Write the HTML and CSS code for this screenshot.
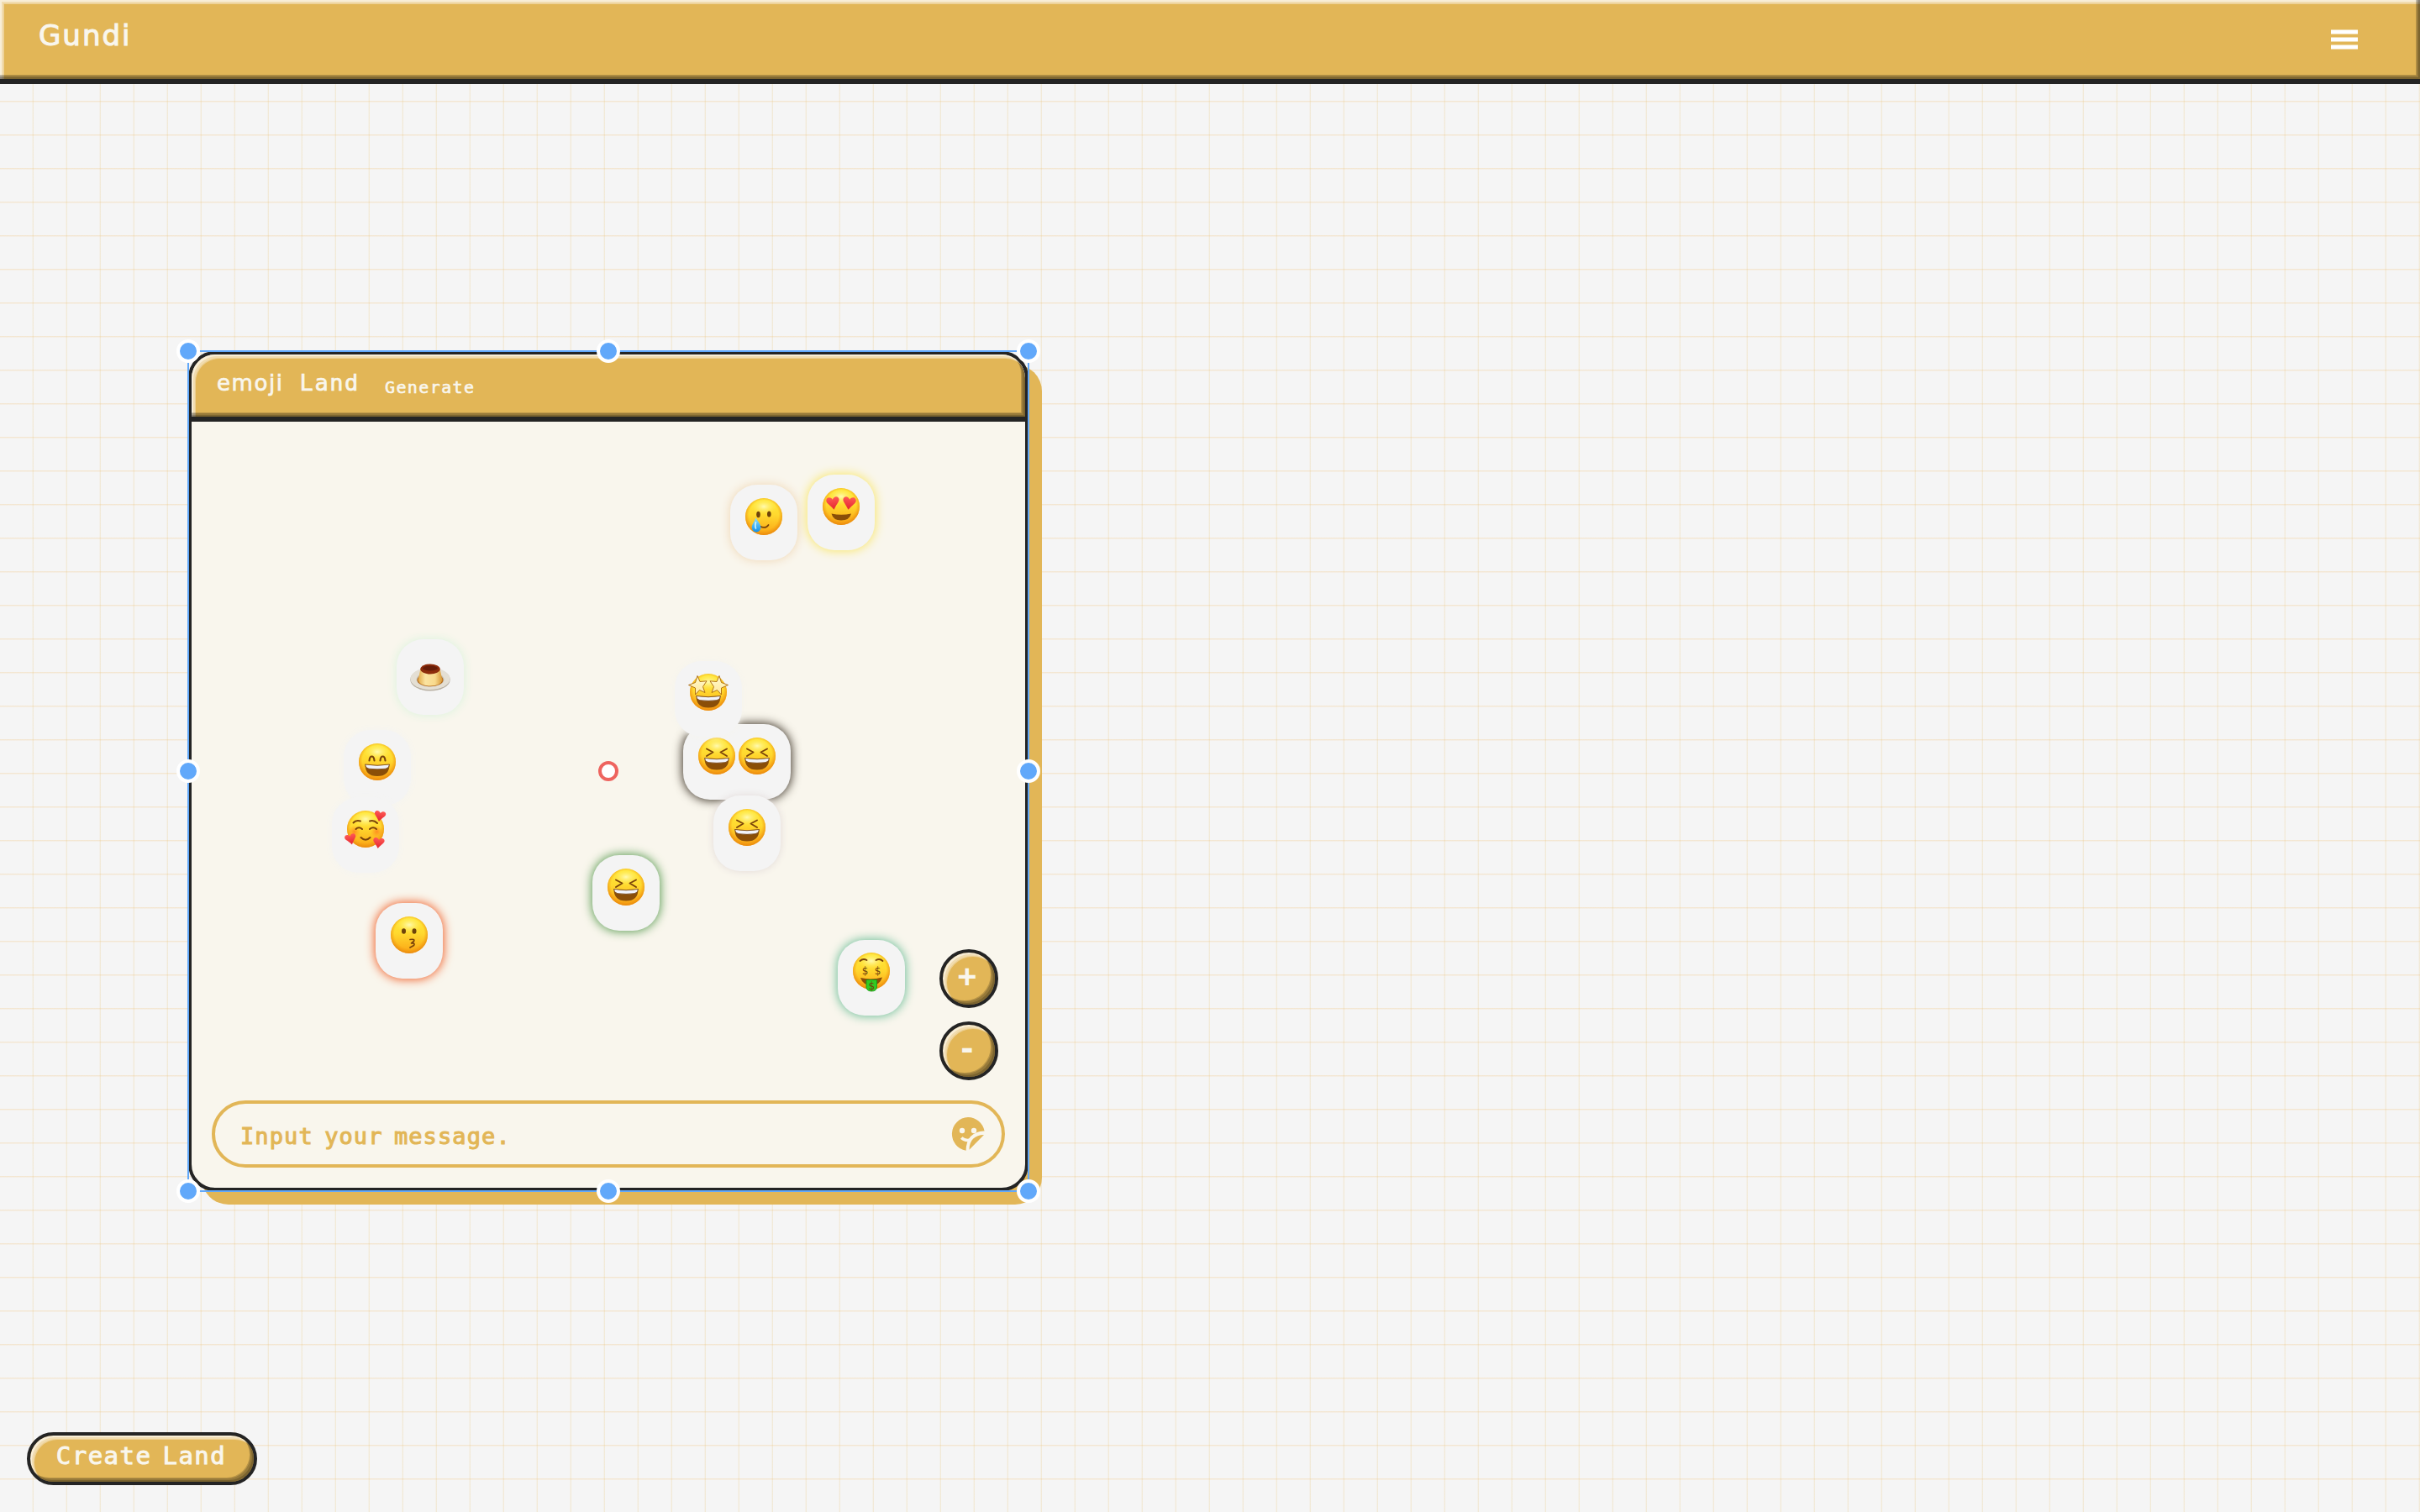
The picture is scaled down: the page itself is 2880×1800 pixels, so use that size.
FILE: index.html
```html
<!DOCTYPE html>
<html lang="en">
<head>
<meta charset="utf-8">
<title>Gundi</title>
<link rel="stylesheet" href="styles.css">
</head>
<body>
<svg class="defs" width="0" height="0" aria-hidden="true">
  <defs>
    <linearGradient id="skin" x1="0" y1="0" x2="0" y2="1">
      <stop offset="0" stop-color="#ffe838"/><stop offset=".45" stop-color="#ffd92f"/><stop offset="1" stop-color="#fba414"/>
    </linearGradient>
    <radialGradient id="rim" cx=".5" cy=".46" r=".54">
      <stop offset=".74" stop-color="#f29a10" stop-opacity="0"/><stop offset="1" stop-color="#e8870d" stop-opacity=".95"/>
    </radialGradient>
    <radialGradient id="glow" cx=".5" cy=".5" r=".5">
      <stop offset="0" stop-color="#fffbb8" stop-opacity=".95"/><stop offset="1" stop-color="#ffee50" stop-opacity="0"/>
    </radialGradient>
    <linearGradient id="red" x1="0" y1="0" x2="0" y2="1">
      <stop offset="0" stop-color="#ff5a55"/><stop offset="1" stop-color="#e3232f"/>
    </linearGradient>
    <radialGradient id="blush" cx=".5" cy=".5" r=".5">
      <stop offset="0" stop-color="#ff6a1c" stop-opacity=".65"/><stop offset="1" stop-color="#ff8a1c" stop-opacity="0"/>
    </radialGradient>
    <linearGradient id="drop" x1="0" y1="0" x2="0" y2="1">
      <stop offset="0" stop-color="#8be0ff"/><stop offset="1" stop-color="#1590e6"/>
    </linearGradient>
    <linearGradient id="star" x1="0" y1="0" x2="0" y2="1">
      <stop offset="0" stop-color="#fffbd0"/><stop offset="1" stop-color="#ffe79a"/>
    </linearGradient>
    <linearGradient id="flan" x1="0" y1="0" x2="1" y2="0">
      <stop offset="0" stop-color="#e2a948"/><stop offset=".3" stop-color="#fbe3a0"/><stop offset=".7" stop-color="#f8d98c"/><stop offset="1" stop-color="#d79736"/>
    </linearGradient>
    <g id="face">
      <circle cx="24" cy="24" r="22" fill="url(#skin)"/>
      <ellipse cx="24" cy="12" rx="16" ry="10" fill="url(#glow)"/>
      <circle cx="24" cy="24" r="22" fill="url(#rim)"/>
    </g>
    <g id="grin">
      <path d="M9.5 27.5Q24 30 38.500 27.500Q38.500 41.500 24 41.500Q9.500 41.500 9.500 27.500Z" fill="#8a4e08"/>
      <path d="M9.500 27.500Q24 30 38.500 27.500Q38.200 32 34 32.700Q24 34 14 32.700Q9.800 32 9.500 27.500Z" fill="#f1f3fa" stroke="#7a4a1a" stroke-width=".9"/>
    </g>
    <path id="heart" d="M0 7C-5-.500-8.500-1.500-7.500-5C-6.500-8.300-2-8.300 0-4.600C2-8.300 6.500-8.300 7.500-5C8.500-1.500 5-.5 0 7Z" fill="url(#red)"/>
    <g id="laugh">
      <use href="#face"/><use href="#grin" y="-1"/>
      <path d="M12 15.500L19.500 19.500L12 24M36 15.500L28.500 19.500L36 24" fill="none" stroke="#7a430a" stroke-width="1.900" stroke-linecap="round" stroke-linejoin="round"/>
    </g>
  </defs>
</svg>

<header class="topbar">
  <h1 class="brand">Gundi</h1>
  <button class="menu" aria-label="Menu">
    <svg width="32" height="24" viewBox="0 0 32 24"><path d="M0 3H32M0 12H32M0 21H32" stroke="#fff" stroke-width="5"/></svg>
  </button>
</header>

<main class="canvas">
  <section class="land">
    <div class="land-head">
      <h2 class="land-title">emoji <span class="mono">Land</span></h2>
      <span class="land-action">Generate</span>
    </div>
    <div class="land-body">
      <div class="zoom">
        <button class="btn round">+</button>
        <button class="btn round">-</button>
      </div>
      <div class="message">
        <span class="message-text">Input your message.</span>
        <svg width="40" height="40" viewBox="0 0 40 40">
          <path d="M20 0A20 20 0 0 1 39.600 16.500Q30 16 23 23Q17.700 29 17.600 39.700A20 20 0 0 1 20 0Z" fill="#e2b657"/>
          <path d="M39 21L21.500 38.800Q21.500 30.500 26 25.800Q31 21 39 21Z" fill="#e2b657"/>
          <circle cx="13" cy="16" r="3.200" fill="#f9f6ed"/><circle cx="27" cy="16" r="3.200" fill="#f9f6ed"/>
          <path d="M12.200 24.500Q16.500 28.600 22.500 27" fill="none" stroke="#f9f6ed" stroke-width="3.600"/>
        </svg>
      </div>
    </div>
  </section>

  <div class="chip tear"><svg viewBox="0 0 48 48"><use href="#face"/><ellipse cx="17.500" cy="21.500" rx="2.300" ry="3.700" fill="#6e430b"/><ellipse cx="30.300" cy="21" rx="2.300" ry="3.500" fill="#6e430b"/><path d="M19.500 35.500Q26 39 29.500 34" fill="none" stroke="#7a430a" stroke-width="1.800" stroke-linecap="round"/><path d="M14.500 25.500C17 30 20.500 33 20.500 37A5.400 5.400 0 0 1 9.700 37C9.700 33 13 30 14.500 25.500Z" fill="url(#drop)"/><path d="M14.500 30Q13 37 15 38.500" stroke="#c5f1ff" stroke-width="1.800" fill="none"/></svg></div>
  <div class="chip love"><svg viewBox="0 0 48 48"><use href="#face"/><path d="M12.500 32.500Q24 35 36 32.500Q34 40.500 24 40.500Q14.500 40.500 12.500 32.500Z" fill="#8a4e08"/><use href="#heart" transform="translate(14.500 20.500) rotate(-8) scale(1 1.050)"/><use href="#heart" transform="translate(33.500 20.500) rotate(8) scale(1 1.050)"/></svg></div>
  <div class="chip pudding"><svg viewBox="0 -5 48 48"><ellipse cx="24" cy="29" rx="23.700" ry="13.500" fill="#b9b1a4"/><ellipse cx="24" cy="28" rx="23.500" ry="13" fill="#e4dfd4"/><ellipse cx="24" cy="29" rx="16.500" ry="8.500" fill="#c9c2b4"/><ellipse cx="24" cy="29.500" rx="15.500" ry="7.800" fill="#b86b18"/><path d="M12.500 16L9.500 30Q12 36.500 24 36.500T38.500 30L35.500 16Z" fill="url(#flan)"/><ellipse cx="24" cy="16.500" rx="11.700" ry="6" fill="#8d2c0b"/><ellipse cx="24" cy="15.500" rx="9" ry="3" fill="#661d08"/></svg></div>
  <div class="chip smile"><svg viewBox="0 0 48 48"><use href="#face"/><use href="#grin" y="-.5"/><path d="M14.500 22.500Q15 17.500 17.500 17.500T20.500 22.500M27.500 22.500Q28 17.500 30.500 17.500T33.500 22.500" fill="none" stroke="#7a430a" stroke-width="2.100" stroke-linecap="round"/></svg></div>
  <div class="chip adore"><svg viewBox="0 0 48 48"><use href="#face"/><circle cx="10.500" cy="27" r="7.500" fill="url(#blush)"/><circle cx="37.500" cy="27" r="7.500" fill="url(#blush)"/><path d="M9.500 16.500Q12.500 13 18 14.500M29 14.500Q34 13 38 17M12.500 24Q16 20.500 20 24M29 24Q33 20.500 37 24M18.500 34Q24 39.500 29.500 34" fill="none" stroke="#7a430a" stroke-width="2" stroke-linecap="round"/><use href="#heart" transform="translate(41 9) rotate(10) scale(.87)"/><use href="#heart" transform="translate(6.500 36.500) rotate(-14) scale(.87)"/><use href="#heart" transform="translate(39.500 41) rotate(8) scale(.87)"/></svg></div>
  <div class="chip kiss"><svg viewBox="0 0 48 48"><use href="#face"/><ellipse cx="17.500" cy="19.500" rx="2.500" ry="3.200" fill="#6e430b"/><ellipse cx="30" cy="19.500" rx="2.500" ry="3.200" fill="#6e430b"/><path d="M25 29.500Q31 28.500 29.500 31.500L26.500 34Q31.500 33.500 29.500 36.500L25 39" fill="none" stroke="#7a430a" stroke-width="1.700" stroke-linecap="round" stroke-linejoin="round"/></svg></div>
  <div class="chip pair"><svg viewBox="0 0 48 48"><use href="#laugh"/></svg><svg viewBox="0 0 48 48"><use href="#laugh"/></svg></div>
  <div class="chip star"><svg viewBox="0 0 48 48"><use href="#face"/><use href="#grin" y="1"/><path id="st" d="M11 4.500L14 11.500L22 10.800L17.500 17.500L20 24.500L13.500 21.500L8.500 27L8.500 19L.5 15.500L8.500 12.500Z" fill="url(#star)" stroke="#a8660c" stroke-width=".9" stroke-linejoin="round"/><use href="#st" transform="matrix(-1 0 0 1 48 0)"/></svg></div>
  <div class="chip mauve"><svg viewBox="0 0 48 48"><use href="#laugh"/></svg></div>
  <div class="chip green"><svg viewBox="0 0 48 48"><use href="#laugh"/></svg></div>
  <div class="chip money"><svg viewBox="0 0 48 48"><use href="#face"/><path d="M10.500 12Q14 8.500 18.500 11M29.500 11Q34 8.500 37.500 12" fill="none" stroke="#7a430a" stroke-width="1.800" stroke-linecap="round"/><path d="M11 32Q24 35 37 31.500Q34 41 24 41Q14 41 11 32Z" fill="#8a4e08"/><path d="M18 34.500H30.500V44Q29.500 48 24.300 48T18 44Z" fill="#2fca22" stroke="#179414" stroke-width=".8"/><g class="dollar"><text x="16.500" y="28">$</text><text x="31.500" y="28">$</text><text x="24.200" y="45.500">$</text></g></svg></div>

  <div class="selection">
    <i class="handle nw"></i><i class="handle n"></i><i class="handle ne"></i>
    <i class="handle w"></i><i class="pivot"></i><i class="handle e"></i>
    <i class="handle sw"></i><i class="handle s"></i><i class="handle se"></i>
  </div>
  <button class="btn create">Create Land</button>
</main>
</body>
</html>
```
FILE: styles.css
```css
:root {
  --gold: #e2b657;
  --ink: #242424;
  --cream: #f9f6ed;
  --paper: #f5f5f5;
  --blue: #61a8fa;
  --bevel:
    inset -2px -2px 0 rgba(0, 0, 0, .18),
    inset -4px -4px 0 rgba(0, 0, 0, .18),
    inset -5px -5px 0 rgba(0, 0, 0, .18),
    inset 2px 2px 0 rgba(255, 255, 255, .5),
    inset 4px 4px 0 rgba(255, 255, 255, .28),
    inset 5px 5px 0 rgba(255, 255, 255, .35);
}
* { box-sizing: border-box; }
body {
  margin: 0;
  height: 1800px;
  display: flex;
  flex-direction: column;
  overflow: hidden;
  background-color: var(--paper);
  background-image:
    linear-gradient(to right, transparent 38px, rgba(226, 182, 87, .07) 38px 39px, rgba(226, 182, 87, .19) 39px),
    linear-gradient(to bottom, rgba(240, 180, 87, .22) 1px, rgba(240, 180, 87, .1) 1px 2px, transparent 2px);
  background-size: 40px 40px;
  font-family: "DejaVu Sans Mono", monospace;
  color: var(--cream);
}
h1, h2 { margin: 0; font-weight: 400; }
button { font: inherit; color: inherit; padding: 0; border: 0; background: none; }
svg { display: block; flex: none; }
.defs { position: absolute; }

.topbar {
  flex: none;
  height: 100px;
  display: flex;
  justify-content: space-between;
  align-items: flex-start;
  padding: 22px 74px 0 46px;
  background: var(--gold);
  border-bottom: 6px solid var(--ink);
  box-shadow: var(--bevel);
}
.brand { font-family: "DejaVu Sans", sans-serif; font-size: 34px; line-height: 40px; letter-spacing: 2px; -webkit-text-stroke: 1.100px; }
.menu { margin-top: 13px; }

.canvas { position: relative; flex: 1; }

.land {
  position: absolute;
  left: 224px;
  top: 318px;
  width: 1000px;
  height: 1000px;
  display: flex;
  flex-direction: column;
  overflow: hidden;
  border: 4px solid var(--ink);
  border-radius: 32px;
  background: var(--cream);
  box-shadow: 16px 16px 0 var(--gold);
}
.land-head {
  flex: none;
  height: 80px;
  display: flex;
  align-items: baseline;
  gap: 30px;
  padding: 18px 30px 0;
  background: var(--gold);
  border-bottom: 6px solid var(--ink);
  border-radius: 28px 28px 0 0;
  box-shadow: var(--bevel);
}
.land-title { font-family: "DejaVu Sans", sans-serif; font-size: 26px; line-height: 32px; letter-spacing: 1.6px; word-spacing: 9px; -webkit-text-stroke: .7px; }
.mono { font-family: "DejaVu Sans Mono", monospace; font-size: 27px; }
.land-action { font-size: 20px; position: relative; top: 3px; letter-spacing: 1.400px; -webkit-text-stroke: .6px; }
.land-body {
  flex: 1;
  display: flex;
  flex-direction: column;
  justify-content: flex-end;
  gap: 24px;
  padding: 24px;
}
.zoom { display: flex; flex-direction: column; gap: 16px; align-items: flex-end; padding-right: 8px; }
.message {
  height: 80px;
  display: flex;
  align-items: center;
  justify-content: space-between;
  padding: 0 20px 0 30px;
  border: 4px solid var(--gold);
  border-radius: 40px;
  color: var(--gold);
}
.message-text { font-size: 27px; padding-top: 5px; letter-spacing: 1.100px; word-spacing: -4px; -webkit-text-stroke: 1.100px; }

.btn {
  border: 4px solid var(--ink);
  background: var(--gold);
  box-shadow: var(--bevel);
}
.round {
  width: 70px;
  height: 70px;
  border-radius: 50%;
  padding: 0 4px 5px 0;
  font-size: 37px;
  line-height: 50px;
  font-weight: 700;
}
.create {
  position: absolute;
  left: 32px;
  top: 1605px;
  width: 274px;
  height: 63px;
  border-radius: 32px;
  padding: 0 2px 7px 0;
  font-size: 29px;
  letter-spacing: 1.500px;
  word-spacing: -6px;
  -webkit-text-stroke: 1px;
}

.chip {
  position: absolute;
  height: 90px;
  padding: 14px 16px 0;
  display: flex;
  border-radius: 32px;
  background: #f4f4f4;
}
.chip svg { width: 48px; height: 48px; overflow: visible; }
.tear { left: 869px; top: 477px; box-shadow: 0 0 12px #efd5b2; }
.love { left: 961px; top: 465px; box-shadow: 0 0 12px 1px #f9e76c; }
.pudding { left: 472px; top: 661px; box-shadow: 0 0 12px #d9f3dc; }
.smile { left: 409px; top: 769px; box-shadow: 0 0 10px #f4f4f2; }
.adore { left: 395px; top: 849px; box-shadow: 0 0 10px #f4f4f2; }
.kiss { left: 447px; top: 975px; box-shadow: 0 0 12px 1px #f0602a; }
.pair { left: 813px; top: 762px; box-shadow: 0 0 12px 1px #3d3428; }
.star { left: 803px; top: 687px; box-shadow: 0 0 10px #f5f4ee; }
.star svg { margin-top: -1px; }
.mauve { left: 849px; top: 847px; box-shadow: 0 0 10px #e2dad8; }
.green { left: 705px; top: 918px; box-shadow: 0 0 12px 1px #5c9c54; }
.money { left: 997px; top: 1019px; box-shadow: 0 0 12px 1px #6fbf9a; }
.money svg { margin-top: -1px; }
.dollar { font: 12px "DejaVu Sans", sans-serif; fill: #6e430b; text-anchor: middle; }

.selection {
  position: absolute;
  left: 223px;
  top: 317px;
  width: 1002px;
  height: 1002px;
  border: 2px solid var(--blue);
}
.handle, .pivot { position: absolute; border-radius: 50%; background: var(--blue); }
.handle { width: 28px; height: 28px; border: 4px solid #fff; margin: -15px; }
.nw, .n, .ne { top: 0; }
.w, .e { top: 500px; }
.sw, .s, .se { top: 1000px; }
.nw, .w, .sw { left: 0; }
.n, .s { left: 500px; }
.ne, .e, .se { left: 1000px; }
.pivot { left: 487px; top: 487px; width: 24px; height: 24px; background: #fff; border: 4px solid #ee645f; }
```
